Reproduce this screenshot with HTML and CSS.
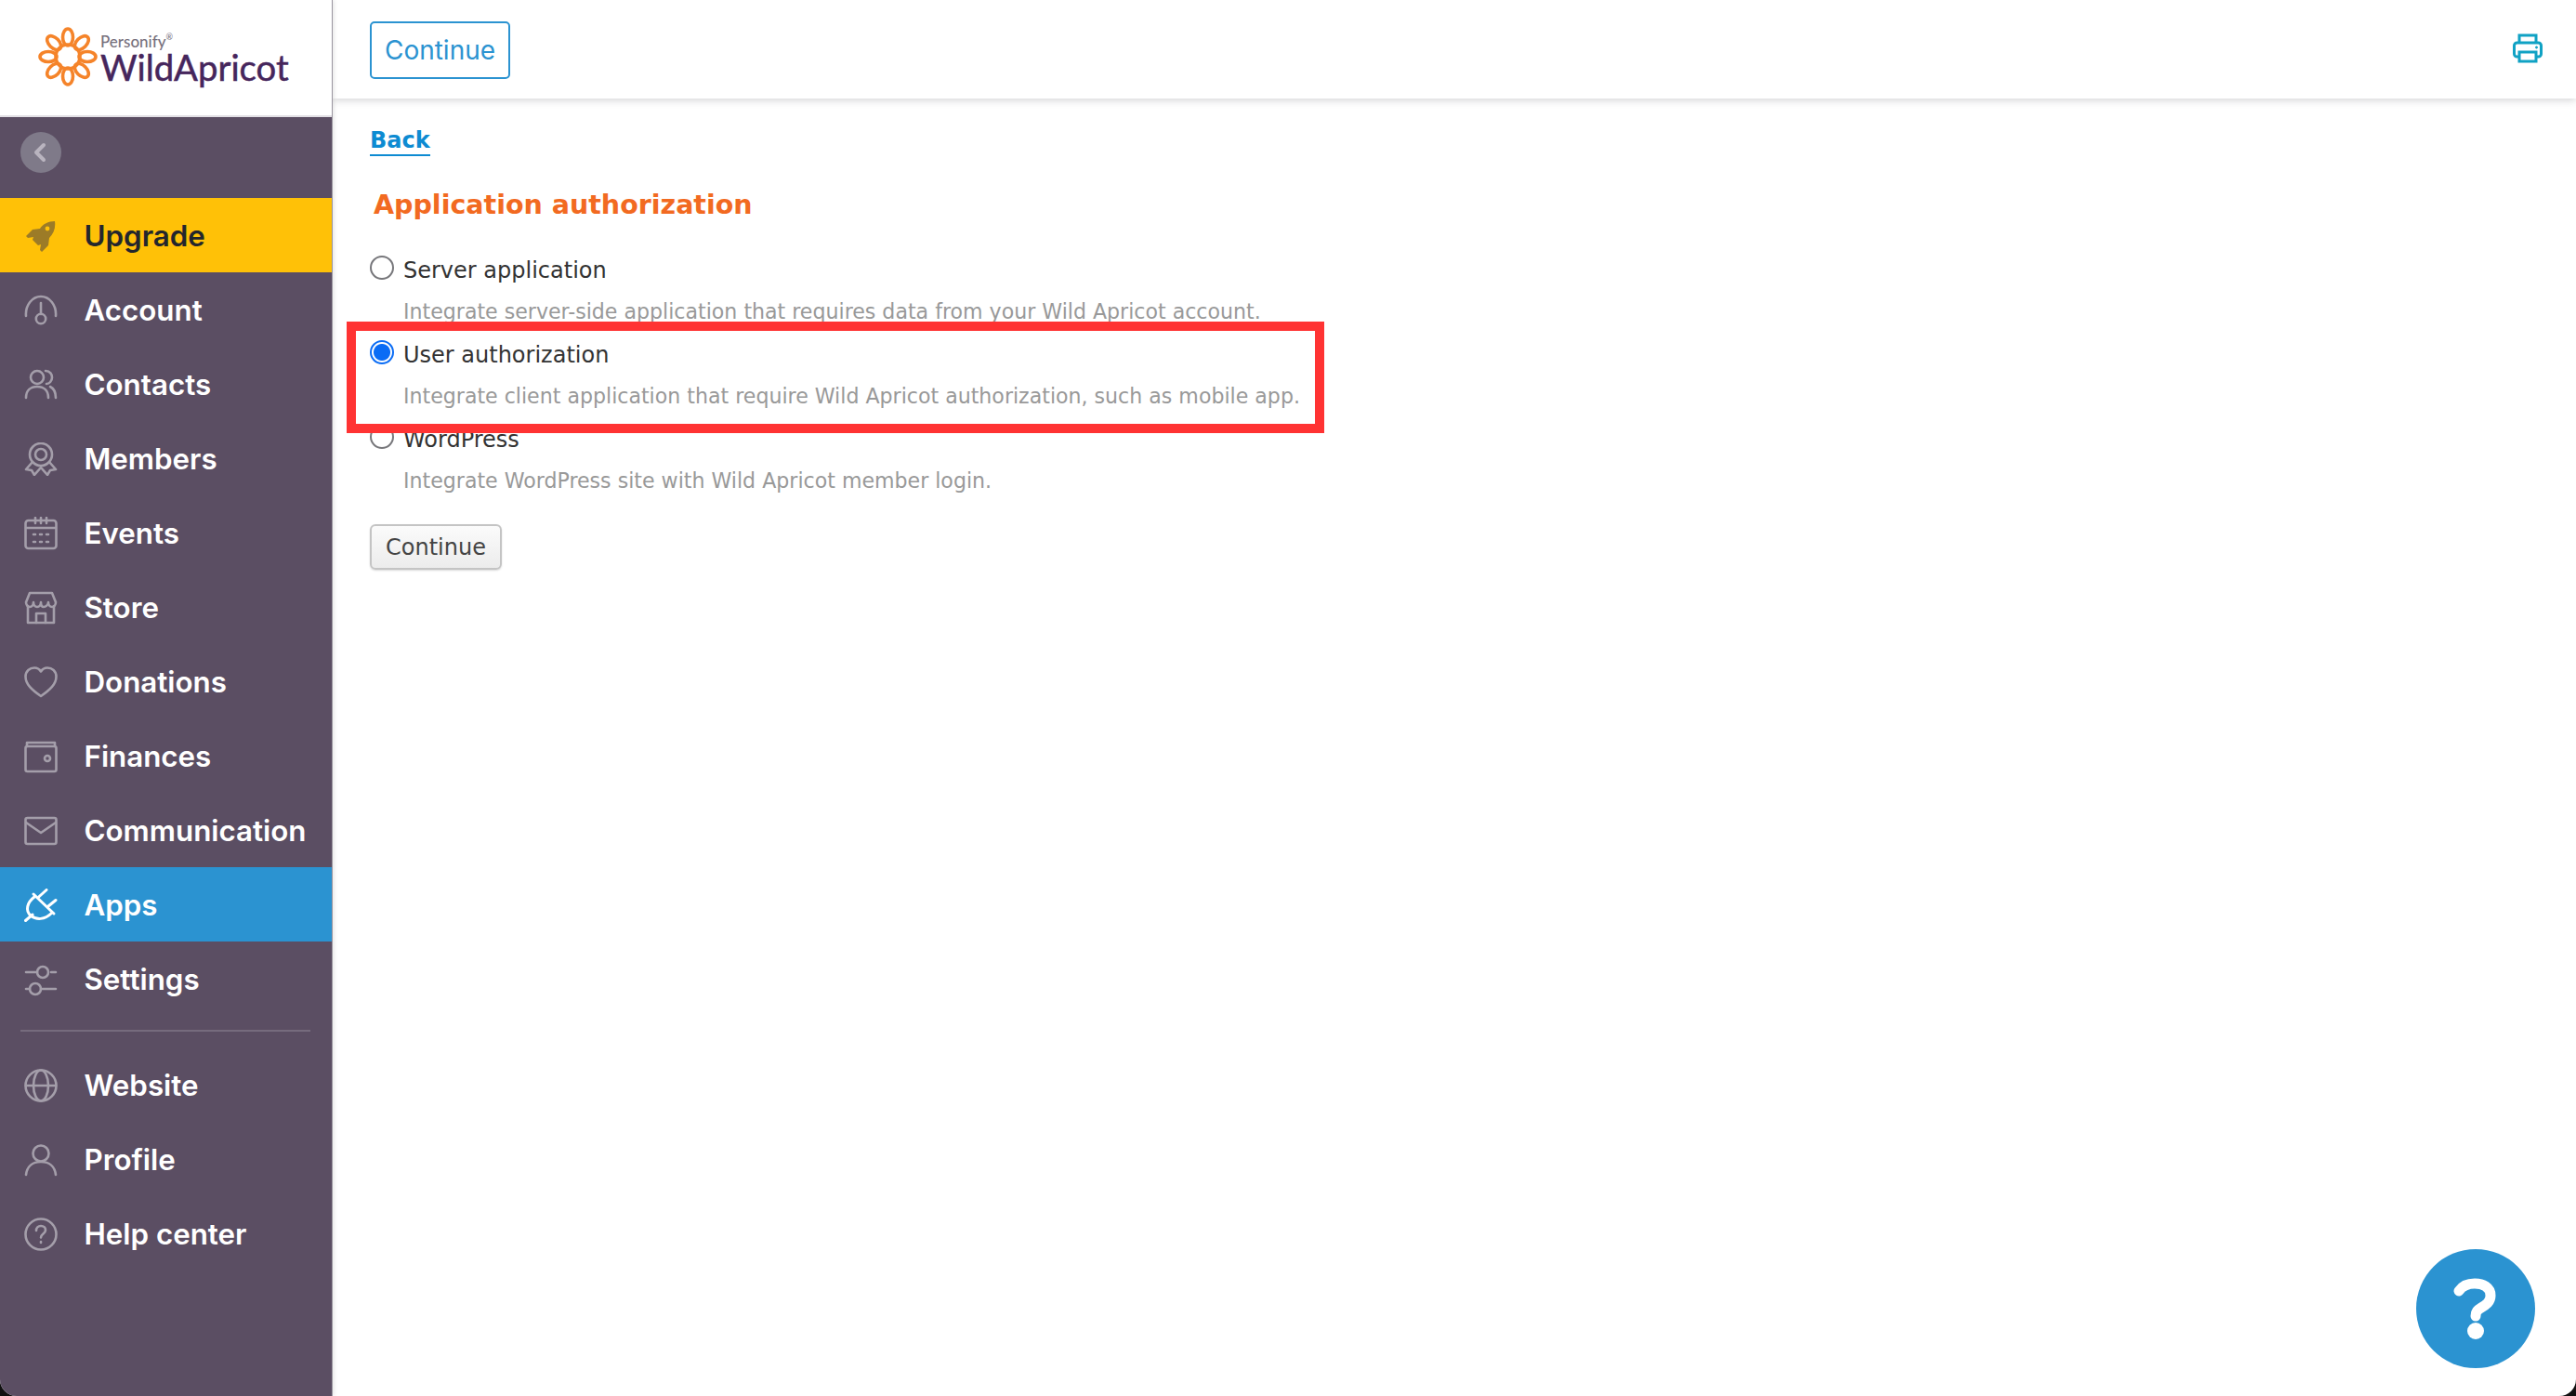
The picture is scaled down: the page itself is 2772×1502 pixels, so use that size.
FILE: index.html
```html
<!DOCTYPE html>
<html lang="en">
<head>
<meta charset="utf-8">
<title>Application authorization</title>
<link rel="stylesheet" href="styles.css">
</head>
<body>
<div class="app">
  <aside class="sidebar">
    <div class="brand">
      <svg class="flower" viewBox="0 0 64 64" fill="none" stroke="#f5842a" stroke-width="3.6">
        <circle cx="32" cy="32" r="13"/>
        <g id="petals">
          <ellipse cx="32" cy="11" rx="5.500" ry="9"/>
          <ellipse cx="32" cy="11" rx="5.500" ry="9" transform="rotate(45 32 32)"/>
          <ellipse cx="32" cy="11" rx="5.500" ry="9" transform="rotate(90 32 32)"/>
          <ellipse cx="32" cy="11" rx="5.500" ry="9" transform="rotate(135 32 32)"/>
          <ellipse cx="32" cy="11" rx="5.500" ry="9" transform="rotate(180 32 32)"/>
          <ellipse cx="32" cy="11" rx="5.500" ry="9" transform="rotate(225 32 32)"/>
          <ellipse cx="32" cy="11" rx="5.500" ry="9" transform="rotate(270 32 32)"/>
          <ellipse cx="32" cy="11" rx="5.500" ry="9" transform="rotate(315 32 32)"/>
        </g>
      </svg>
      <div class="wordmark">
        <span class="personify">Personify<sup class="reg">®</sup></span>
        <span class="wild">WildApricot</span>
      </div>
    </div>
    <div class="toggle-row">
      <button class="collapse" type="button" aria-label="Collapse">
        <svg viewBox="0 0 44 44" fill="none" stroke="#b9b4bf" stroke-width="4" stroke-linecap="round" stroke-linejoin="round"><path d="M25 14l-8 8 8 8"/></svg>
      </button>
    </div>
    <nav class="nav">
      <a class="item upgrade">
        <svg class="ico" viewBox="0 0 36 36"><path fill="#9c7b27" d="M33 2c1 7-1 13-6 18l-1 8-7 7-2-2 1-6-3 1-6-6 1-3-6 1-2-2 7-7 8-1C20 5 26 2 33 2z"/><circle cx="25" cy="10" r="2.4" fill="#ffc107"/></svg>
        <span>Upgrade</span>
      </a>
      <a class="item">
        <svg class="ico" viewBox="0 0 36 36"><path d="M2 24C1 12 9 3 18 3s17 9 16 21"/><path d="M18 10v12"/><circle cx="18" cy="27" r="5.2"/></svg>
        <span>Account</span>
      </a>
      <a class="item">
        <svg class="ico" viewBox="0 0 36 36"><circle cx="14" cy="10" r="7"/><path d="M2 32c0-8 5-12 12-12s12 4 12 12"/><path d="M23 3c5 0 7 4 7 7 0 4-3 7-6 7"/><path d="M28 20c4 2 6 6 6 12"/></svg>
        <span>Contacts</span>
      </a>
      <a class="item">
        <svg class="ico" viewBox="0 0 36 36"><circle cx="18" cy="13" r="12"/><circle cx="18" cy="13" r="6"/><path d="M9 21l-7 8 6 1 3 5 7-8 7 8 3-5 6-1-7-8"/></svg>
        <span>Members</span>
      </a>
      <a class="item">
        <svg class="ico" viewBox="0 0 36 36"><rect x="1.500" y="4" width="33" height="30" rx="3"/><path d="M2 12h32M12 1v6M18 1v6M24 1v6"/><path class="dots" d="M10 19h2M17 19h2M24 19h2M10 27h2M17 27h2M24 27h2"/></svg>
        <span>Events</span>
      </a>
      <a class="item">
        <svg class="ico" viewBox="0 0 36 36"><path d="M6 2h24l4 10c0 3-2 5-4 5s-4-2-4-5c0 3-3 5-5 5s-3-2-3-5c0 3-2 5-4 5s-4-2-4-5c0 3-2 5-4 5s-4-2-4-5z"/><path d="M4 16v18h28V16"/><path d="M13 34V24h10v10"/></svg>
        <span>Store</span>
      </a>
      <a class="item">
        <svg class="ico" viewBox="0 0 36 36"><path d="M18 33C8 26 1.500 20 1.500 12 1.500 6 6 2.500 11 2.500c3 0 5.500 1.500 7 4 1.500-2.500 4-4 7-4 5 0 9.500 3.500 9.500 9.500 0 8-6.500 14-16.500 21z"/></svg>
        <span>Donations</span>
      </a>
      <a class="item">
        <svg class="ico" viewBox="0 0 36 36"><rect x="1.500" y="7" width="33" height="27" rx="2"/><path d="M3 7V3h30v4"/><circle cx="25" cy="20" r="3"/></svg>
        <span>Finances</span>
      </a>
      <a class="item">
        <svg class="ico" viewBox="0 0 36 36"><rect x="1.500" y="4" width="33" height="28" rx="2"/><path d="M2 9l16 11L34 9"/></svg>
        <span>Communication</span>
      </a>
      <a class="item active">
        <svg class="ico" viewBox="0 0 36 36"><path d="M10 6l22 21"/><path d="M11 9C3 15 1 24 7 29s15 5 23-3"/><path d="M15.700 9L24 1.500M26 19l8-6.500M1.500 34.500L9 28"/></svg>
        <span>Apps</span>
      </a>
      <a class="item">
        <svg class="ico" viewBox="0 0 36 36"><circle cx="20" cy="10" r="6"/><circle cx="12" cy="28" r="6"/><path d="M2 10h12M29 10h5M2 28h4M18 28h16"/></svg>
        <span>Settings</span>
      </a>
      <hr class="rule">
      <a class="item">
        <svg class="ico" viewBox="0 0 36 36"><circle cx="18" cy="18" r="16.500"/><ellipse cx="18" cy="18" rx="8" ry="16.500"/><path d="M2 18h32"/></svg>
        <span>Website</span>
      </a>
      <a class="item">
        <svg class="ico" viewBox="0 0 36 36"><circle cx="18" cy="11" r="8.500"/><path d="M2 34c1-9 7-14 16-14s15 5 16 14"/></svg>
        <span>Profile</span>
      </a>
      <a class="item">
        <svg class="ico" viewBox="0 0 36 36"><circle cx="18" cy="18" r="16.500"/><path d="M13 14c0-3 2-5 5-5s5 2 5 4.500c0 4-5 4-5 8"/><path d="M18 26v1"/></svg>
        <span>Help center</span>
      </a>
    </nav>
  </aside>

  <main class="main">
    <header class="topbar">
      <button class="btn-outline" type="button">Continue</button>
      <svg class="print" viewBox="0 0 32 32" fill="none" stroke="#10a2c4" stroke-width="3"><path d="M7 10V2h18v8"/><rect x="1.500" y="10" width="29" height="15" rx="3"/><path d="M7 20h18v10H7z" fill="#fff"/><circle cx="25.500" cy="15" r="1" fill="#10a2c4" stroke-width="1"/></svg>
    </header>
    <section class="content">
      <a class="back">Back</a>
      <h1 class="title">Application authorization</h1>
      <div class="options">
        <div class="option">
          <label class="opt-label"><input class="radio" type="radio" name="app"><span>Server application</span></label>
          <p class="opt-desc">Integrate server-side application that requires data from your Wild Apricot account.</p>
        </div>
        <div class="option">
          <label class="opt-label"><input class="radio" type="radio" name="app" checked><span>User authorization</span></label>
          <p class="opt-desc">Integrate client application that require Wild Apricot authorization, such as mobile app.</p>
        </div>
        <div class="option">
          <label class="opt-label"><input class="radio" type="radio" name="app"><span>WordPress</span></label>
          <p class="opt-desc">Integrate WordPress site with Wild Apricot member login.</p>
        </div>
      </div>
      <button class="btn-grey" type="button">Continue</button>
      <div class="highlight"></div>
    </section>
    <button class="help" type="button" aria-label="Help">
      <svg viewBox="0 0 48 66" fill="none"><path d="M6 14C10 8 16 6 23 6c9 0 17 4 17 13 0 7-5 10-10 13-4 2.500-6 4-6 9" stroke="#fff" stroke-width="11" stroke-linecap="round" stroke-linejoin="round"/><circle cx="24" cy="57" r="9" fill="#fff"/></svg>
    </button>
  </main>
</div>
</body>
</html>
```

FILE: styles.css
```css
* { box-sizing: border-box; }

html, body {
  margin: 0;
  height: 100%;
  background: #111;
}

.app {
  display: flex;
  height: 1502px;
  background: #fff;
  border-radius: 0 0 18px 18px;
  overflow: hidden;
}

/* Sidebar */
.sidebar {
  flex: 0 0 358px;
  display: flex;
  flex-direction: column;
  background: #5b4e63;
  border-right: 1px solid #9a95a0;
  box-shadow: 1px 0 5px rgba(0, 0, 0, .12);
  position: relative;
  z-index: 2;
}

.brand {
  height: 126px;
  background: #fff;
  border-bottom: 2px solid #e2e0e5;
  display: flex;
  align-items: flex-start;
  padding: 29px 0 0 41px;
  gap: 3px;
}

.flower { width: 64px; height: 64px; flex: none; }

.wordmark { display: flex; flex-direction: column; }

.personify {
  height: 18px;
  margin-top: 7px;
  font: 500 17px/18px "Lato", sans-serif;
  color: #77717d;
}

.reg { font-size: 9px; line-height: 0; vertical-align: 8px; }

.wild {
  font: 400 38.300px/36px "Lato", sans-serif;
  color: #46265c;
  -webkit-text-stroke: 0.5px #46265c;
}

.toggle-row {
  height: 87px;
  display: flex;
  align-items: flex-start;
  padding: 16px 0 0 22px;
}

.collapse {
  width: 44px;
  height: 44px;
  padding: 0;
  border: 0;
  border-radius: 50%;
  background: #7f7a89;
}

.collapse svg { display: block; }

.nav { display: flex; flex-direction: column; }

.item {
  height: 80px;
  display: flex;
  align-items: center;
  gap: 28.500px;
  padding: 1px 0 0 26px;
  font: 600 31.300px "Inter", sans-serif;
  color: #fff;
}

.ico {
  width: 36px;
  height: 36px;
  flex: none;
  fill: none;
  stroke: #a49eaa;
  stroke-width: 2.6;
  stroke-linecap: round;
  stroke-linejoin: round;
}

.upgrade { background: #ffc107; color: #23262d; }
.upgrade .ico { stroke: none; }

.active { background: #2b93d1; }
.active .ico { stroke: #fff; stroke-width: 3; }

.rule {
  width: 312px;
  margin: 15px 0 0 22px;
  border: 0;
  border-top: 2px solid #766b7d;
  height: 0;
}

.rule + .item { margin-top: 17px; }

/* Main */
.main {
  flex: 1;
  display: flex;
  flex-direction: column;
  position: relative;
  min-width: 0;
}

.topbar {
  height: 106px;
  flex: none;
  display: flex;
  align-items: center;
  justify-content: space-between;
  padding: 0 36px 0 40px;
  box-shadow: 0 2px 8px rgba(60, 60, 70, .22);
}

.btn-outline {
  width: 151px;
  height: 62px;
  margin-top: 2px;
  padding: 0;
  background: #fff;
  border: 2px solid #2b93d1;
  border-radius: 5px;
  color: #2b93d1;
  font: 400 28px "Inter", sans-serif;
}

.print { width: 32px; height: 32px; margin-top: -2px; }

.content {
  position: relative;
  flex: 1;
  padding: 30px 0 0 40px;
  font-family: "DejaVu Sans", sans-serif;
}

.back {
  display: table;
  font-size: 24px;
  font-weight: 700;
  line-height: 30px;
  color: #0d8bd2;
  border-bottom: 2px solid #0d8bd2;
}

.title {
  margin: 36px 0 0 4px;
  font-size: 28.500px;
  font-weight: 700;
  line-height: 34px;
  color: #f26a21;
}

.options { margin-top: 38px; }

.option { height: 91px; }

.opt-label {
  display: flex;
  align-items: center;
  height: 30px;
  font-size: 24px;
  color: #333;
}

.radio {
  appearance: none;
  width: 26px;
  height: 26px;
  margin: -6px 10px 0 0;
  flex: none;
  background: #fff;
  border: 2px solid #77777b;
  border-radius: 50%;
}

.radio:checked {
  border: 2px solid #0a6cf5;
  background: radial-gradient(circle, #0a6cf5 0 8.500px, #fff 9.500px);
}

.opt-desc {
  margin: 14px 0 0 36px;
  font-size: 22.100px;
  line-height: 30px;
  color: #999;
}

.btn-grey {
  display: block;
  width: 142px;
  height: 49px;
  margin-top: 15px;
  padding: 0;
  border: 2px solid #c4c4c4;
  border-radius: 6px;
  background: linear-gradient(#fbfbfb, #ececec);
  box-shadow: 0 1px 2px rgba(0, 0, 0, .15);
  color: #444;
  font: 400 24px "DejaVu Sans", sans-serif;
}

.highlight {
  position: absolute;
  left: 15px;
  top: 240px;
  width: 1052px;
  height: 120px;
  border: 10px solid #ff3333;
}

.help {
  position: absolute;
  right: 44px;
  bottom: 30px;
  width: 128px;
  height: 128px;
  padding: 0;
  border: 0;
  border-radius: 50%;
  background: #2b93d1;
  display: flex;
  align-items: center;
  justify-content: center;
}

.help svg { width: 48px; height: 66px; }
```
